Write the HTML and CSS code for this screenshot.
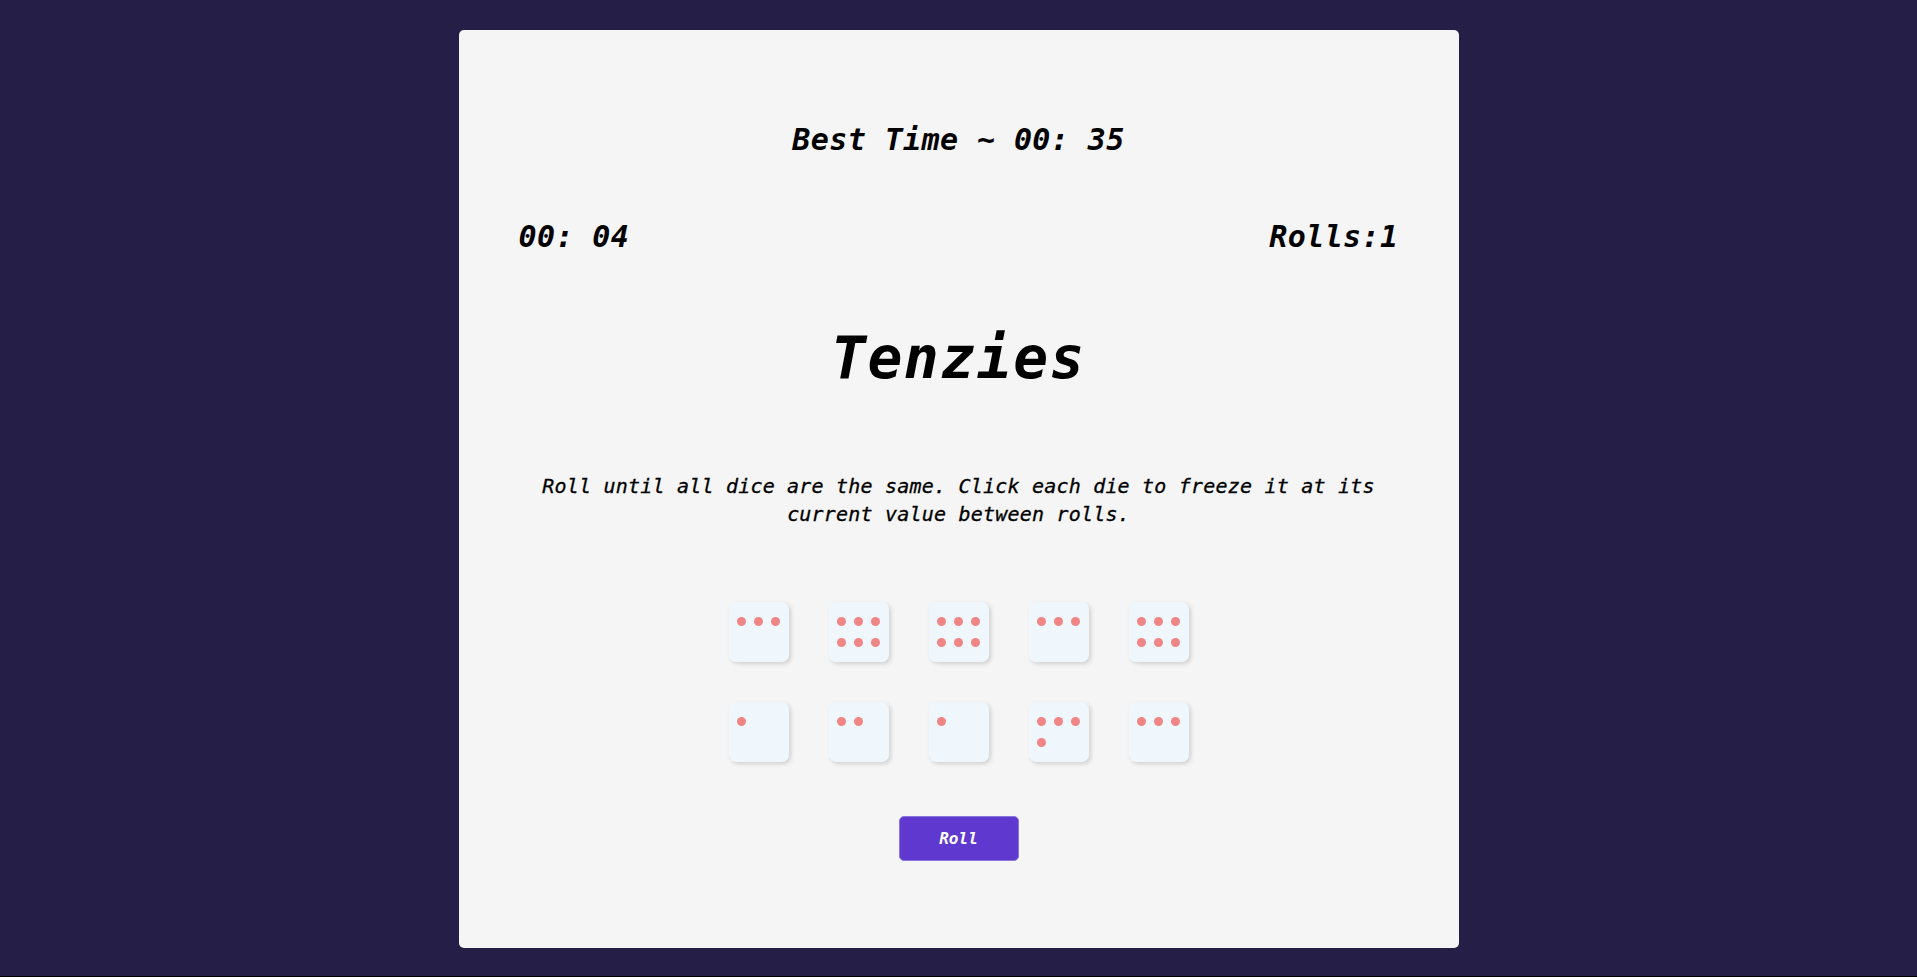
FILE: index.html
```html
<!DOCTYPE html>
<html lang="en">
<head>
<meta charset="utf-8">
<title>Tenzies</title>
<link rel="stylesheet" href="styles.css">
</head>
<body>
<main class="card">
  <h2 class="best">Best Time ~ 00: 35</h2>
  <div class="stats">
    <span class="timer">00: 04</span>
    <span class="rolls">Rolls:1</span>
  </div>
  <h1 class="title">Tenzies</h1>
  <p class="instructions">Roll until all dice are the same. Click each die to freeze it at its current value between rolls.</p>
  <div class="dice">
    <div class="die"><span class="dot"></span><span class="dot"></span><span class="dot"></span></div>
    <div class="die"><span class="dot"></span><span class="dot"></span><span class="dot"></span><span class="dot"></span><span class="dot"></span><span class="dot"></span></div>
    <div class="die"><span class="dot"></span><span class="dot"></span><span class="dot"></span><span class="dot"></span><span class="dot"></span><span class="dot"></span></div>
    <div class="die"><span class="dot"></span><span class="dot"></span><span class="dot"></span></div>
    <div class="die"><span class="dot"></span><span class="dot"></span><span class="dot"></span><span class="dot"></span><span class="dot"></span><span class="dot"></span></div>
    <div class="die"><span class="dot"></span></div>
    <div class="die"><span class="dot"></span><span class="dot"></span></div>
    <div class="die"><span class="dot"></span></div>
    <div class="die"><span class="dot"></span><span class="dot"></span><span class="dot"></span><span class="dot"></span></div>
    <div class="die"><span class="dot"></span><span class="dot"></span><span class="dot"></span></div>
  </div>
  <button class="roll">Roll</button>
</main>
</body>
</html>
```
FILE: styles.css
```css
html {
  background: #000;
}
body {
  margin: 0;
  height: 976px;
  background: #251f47;
  font-family: "DejaVu Sans Mono", "Liberation Mono", monospace;
  font-style: italic;
  color: #000;
  overflow: hidden;
}
.card {
  box-sizing: border-box;
  width: 1000px;
  height: 918px;
  margin: 30px auto 0;
  padding: 92px 60px 0;
  background: #f5f5f5;
  border-radius: 5px;
  display: flex;
  flex-direction: column;
  align-items: center;
}
.best {
  margin: 0;
  font-size: 30px;
  line-height: 36px;
  font-weight: bold;
  letter-spacing: 0.4px;
  text-align: center;
}
.stats {
  align-self: stretch;
  display: flex;
  justify-content: space-between;
  margin-top: 61px;
  font-size: 30px;
  line-height: 36px;
  font-weight: bold;
  letter-spacing: 0.4px;
}
.title {
  margin: 69px 0 0;
  font-size: 58px;
  line-height: 68px;
  font-weight: bold;
  letter-spacing: 1.5px;
}
.instructions {
  margin: 80px 0 0;
  font-size: 20px;
  line-height: 28px;
  text-align: center;
  letter-spacing: 0.2px;
  -webkit-text-stroke: 0.3px #000;
}
.dice {
  margin-top: 74px;
  display: grid;
  grid-template-columns: repeat(5, 60px);
  gap: 40px;
}
.die {
  box-sizing: border-box;
  width: 60px;
  height: 60px;
  padding: 15px 5px 0;
  background: #eff7fd;
  border-radius: 7px;
  box-shadow: 2px 2px 4px rgba(0, 0, 0, 0.15);
  display: grid;
  grid-template-columns: repeat(3, 1fr);
  grid-auto-rows: 9px;
  row-gap: 12px;
  justify-items: center;
  align-content: start;
}
.dot {
  width: 9px;
  height: 9px;
  border-radius: 50%;
  background: #f08585;
}
.roll {
  margin-top: 54px;
  width: 120px;
  height: 45px;
  border: 1px solid #8a74dd;
  border-radius: 5px;
  background: #5f38cf;
  color: #fff;
  font-family: "DejaVu Sans Mono", "Liberation Mono", monospace;
  font-style: italic;
  font-weight: bold;
  font-size: 16px;
  cursor: pointer;
}
```
